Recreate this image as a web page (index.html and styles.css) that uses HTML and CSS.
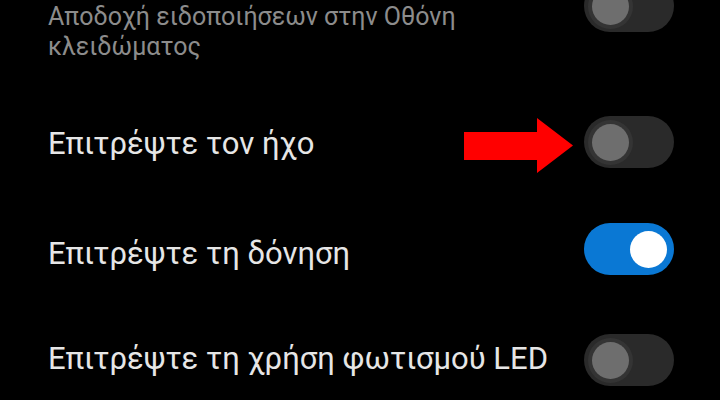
FILE: index.html
```html
<!DOCTYPE html>
<html lang="el">
<head>
<meta charset="utf-8">
<link rel="stylesheet" href="styles.css">
</head>
<body>
<div class="screen">
  <div class="row row-first">
    <div class="summary">Αποδοχή ειδοποιήσεων στην Οθόνη<br>κλειδώματος</div>
    <div class="toggle toggle-first"><span class="knob"></span></div>
  </div>
  <div class="row row-1">
    <div class="label">Επιτρέψτε τον ήχο</div>
    <div class="toggle"><span class="knob"></span></div>
  </div>
  <div class="row row-2">
    <div class="label">Επιτρέψτε τη δόνηση</div>
    <div class="toggle on"><span class="knob"></span></div>
  </div>
  <div class="row row-3">
    <div class="label">Επιτρέψτε τη χρήση φωτισμού LED</div>
    <div class="toggle"><span class="knob"></span></div>
  </div>
  <svg class="arrow" width="120" height="60" viewBox="0 0 120 60">
    <polygon points="0,14 73,14 73,0 109,27.5 73,55 73,42 0,42" fill="#ff0000"/>
  </svg>
</div>
</body>
</html>
```
FILE: styles.css
```css
html, body {
  margin: 0;
  padding: 0;
  background: #000;
}
.screen {
  position: relative;
  width: 720px;
  height: 400px;
  overflow: hidden;
  background: #000;
  font-family: Roboto, "Noto Sans", sans-serif;
}
.row {
  display: flex;
  align-items: center;
  justify-content: space-between;
  padding: 0 46px 0 48px;
  height: 52px;
}
.row-first {
  height: 62px;
  align-items: flex-start;
}
.row-1 { margin-top: 54px; }
.row-2 { margin-top: 55px; }
.row-3 { margin-top: 59px; }
.summary {
  font-size: 25px;
  line-height: 30px;
  color: #8c8c8c;
  padding-top: 2px;
}
.label {
  font-size: 31px;
  line-height: 36px;
  color: #e6e6e6;
}
.row-1 .label { padding-top: 4px; }
.row-2 .label { padding-top: 10px; }
.row-3 .label { padding-bottom: 2px; }
.toggle {
  flex: none;
  position: relative;
  width: 90px;
  height: 52px;
  border-radius: 26px;
  background: #2a2a2a;
}
.toggle-first {
  margin-top: -20px;
}
.knob {
  position: absolute;
  top: 7.5px;
  left: 8px;
  width: 37px;
  height: 37px;
  border-radius: 50%;
  background: #6e6e6e;
  box-shadow: 0 0 0 4px #343434;
}
.toggle.on {
  background: #0a78d4;
}
.toggle.on .knob {
  left: 46px;
  background: #ffffff;
  box-shadow: none;
}
.arrow {
  position: absolute;
  left: 464px;
  top: 118px;
}
```
